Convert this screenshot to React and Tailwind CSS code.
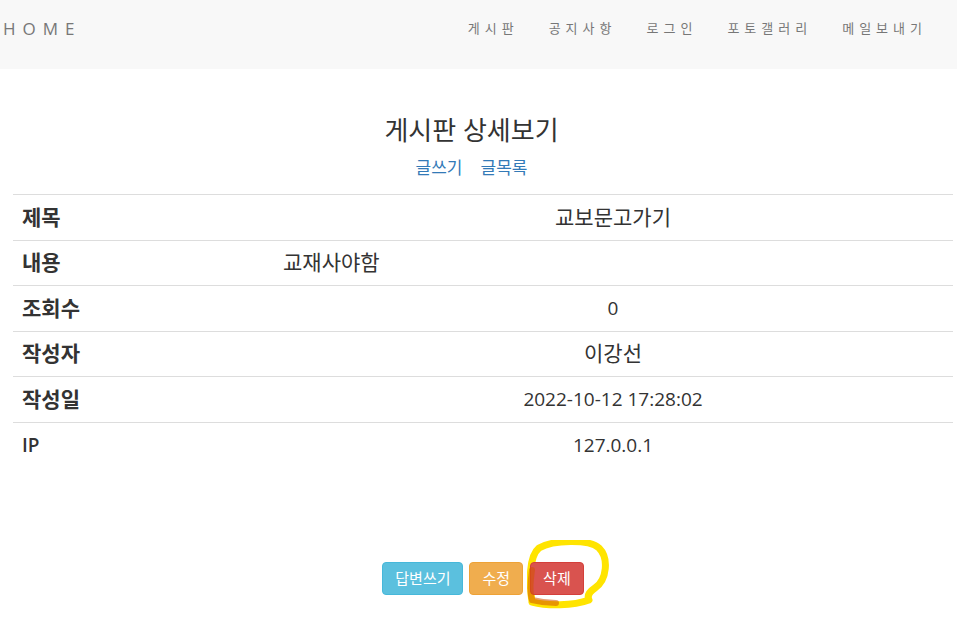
import React from 'react';

const font = { fontFamily: '"Open Sans", "Noto Sans CJK KR", sans-serif' };

const rows = [
  { label: '제목', value: '교보문고가기', align: 'center', ko: true },
  { label: '내용', value: '교재사야함', align: 'left', ko: true },
  { label: '조회수', value: '0', align: 'center', ko: false },
  { label: '작성자', value: '이강선', align: 'center', ko: true },
  { label: '작성일', value: '2022-10-12 17:28:02', align: 'center', ko: false },
  { label: 'IP', value: '127.0.0.1', align: 'center', ko: false },
];

const menu = ['게시판', '공지사항', '로그인', '포토갤러리', '메일보내기'];

function App() {
  return (
    <div className="min-h-screen bg-white text-[#333]" style={font}>
      <nav className="h-[69px] bg-[#f8f8f8] flex items-center justify-between pr-[15px]">
        <a className="pl-[3px] text-[17px] tracking-[7px] text-[#777] -mt-[11px]">HOME</a>
        <ul className="flex items-center -mt-[11px]">
          {menu.map((m) => (
            <li key={m} className="px-[15px] text-[13px] tracking-[5px] text-[#777]">
              {m}
            </li>
          ))}
        </ul>
      </nav>

      <div className="flex flex-col items-center pr-[14px]">
        <h2 className="mt-[44px] text-[26px] leading-[34px] text-[#333]">게시판 상세보기</h2>
        <div className="mt-[9px] flex gap-[18px] text-[17px] leading-[24px] text-[#337ab7]">
          <a>글쓰기</a>
          <a>글목록</a>
        </div>
      </div>

      <table className="ml-[13px] mt-[14px] w-[940px] border-collapse">
        <tbody>
          {rows.map((r, i) => (
            <tr key={r.label} className={i < rows.length - 1 ? 'border-t border-b border-[#ddd]' : 'border-t border-[#ddd]'}>
              <th className={r.label === 'IP' ? 'w-[260px] h-[45.6px] px-[9px] text-left font-semibold text-[19px]' : 'w-[260px] h-[45.6px] px-[9px] text-left font-bold text-[21px]'}>
                {r.label}
              </th>
              <td
                className={
                  (r.align === 'left' ? 'h-[45.6px] px-[10px] text-left ' : 'h-[45.6px] px-[10px] text-center ') +
                  (r.ko ? 'text-[21px]' : 'text-[19px]')
                }
              >
                {r.value}
              </td>
            </tr>
          ))}
        </tbody>
      </table>

      <div className="mt-[94px] pl-[9px] flex justify-center gap-[6px] text-[15px] text-white">
        <button className="h-[33px] px-[12px] rounded-[4px] bg-[#5bc0de] border border-[#46b8da]">답변쓰기</button>
        <button className="h-[33px] px-[12px] rounded-[4px] bg-[#f0ad4e] border border-[#eea236]">수정</button>
        <div className="relative ml-[1px]">
          <svg className="absolute left-[-3px] top-[-22px] pointer-events-none" width="90" height="72" viewBox="0 0 90 72" fill="none">
            <path
              d="M5 62 C2 42 2 16 12 8 C26 0 62 -1 72 8 C82 18 80 40 68 48 C62 52 60 56 62 60 C46 66 20 66 5 62"
              stroke="#ffe400"
              strokeWidth="7"
              strokeLinecap="round"
              strokeLinejoin="round"
            />
          </svg>
          <button className="relative h-[33px] px-[12px] rounded-[4px] bg-[#d9534f] border border-[#d43f3a]">삭제</button>
          <svg className="absolute left-[-3px] top-[-22px] pointer-events-none" width="90" height="72" viewBox="0 0 90 72" fill="none">
            <path d="M5 30 C3 44 3 54 5 60 C13 62 21 63 29 63" stroke="#d35400" strokeOpacity="0.55" strokeWidth="6" strokeLinecap="round" />
          </svg>
        </div>
      </div>
    </div>
  );
}

export default App;
